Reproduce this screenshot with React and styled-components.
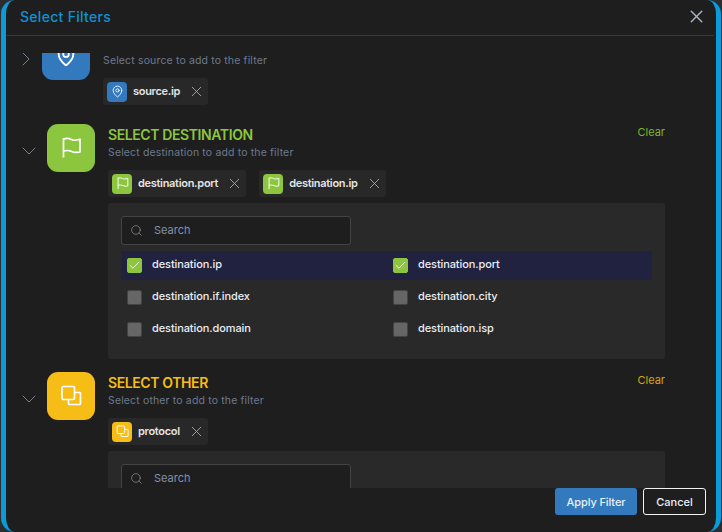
import React from 'react';
import styled, { createGlobalStyle } from 'styled-components';
import { ChevronRight, ChevronDown, X, Search, MapPin, Check } from 'lucide-react';

const GlobalStyle = createGlobalStyle`
  html, body {
    margin: 0;
    padding: 0;
    background: #2b2d31;
  }
  * {
    box-sizing: border-box;
  }
`;

const BLUE = '#3379bd';
const GREEN = '#8cc63f';
const YELLOW = '#f7bd17';

// lucide's flag has a base line and its copy is the wrong way round, so these two are drawn
function FlagIcon({ size, strokeWidth }) {
  return (
    <svg width={size} height={size} viewBox="0 0 22 22" fill="none" stroke="currentColor" strokeWidth={strokeWidth} strokeLinejoin="round">
      <path d="M3.5 1v19.5" />
      <path d="M3.5 2.2C7 .8 9.5 1.6 11.2 2.6S15.5 3.6 20 2.2V15C16 16 14 15.5 11.7 14.5S6 13.2 3.5 14.2" />
    </svg>
  );
}

function StackIcon({ size, strokeWidth }) {
  return (
    <svg width={size} height={size} viewBox="0 0 22 22" fill="none" stroke="currentColor" strokeWidth={strokeWidth} strokeLinejoin="round">
      <rect x="2" y="1.5" width="12.5" height="13" rx="1.5" />
      <path d="M14.5 7.5h5q1 0 1 1v10q0 1-1 1h-10q-1 0-1-1v-4" />
    </svg>
  );
}

const sections = [
  {
    id: 'destination',
    title: 'SELECT DESTINATION',
    desc: 'Select destination to add to the filter',
    color: GREEN,
    clear: '#7fb42f',
    Icon: FlagIcon,
    chips: ['destination.port', 'destination.ip'],
    options: [
      ['destination.ip', true],
      ['destination.port', true],
      ['destination.if.index', false],
      ['destination.city', false],
      ['destination.domain', false],
      ['destination.isp', false],
    ],
  },
  {
    id: 'other',
    title: 'SELECT OTHER',
    desc: 'Select other to add to the filter',
    color: YELLOW,
    clear: '#d9a514',
    Icon: StackIcon,
    chips: ['protocol'],
    options: [],
  },
];

function Chip({ label, color, Icon }) {
  return (
    <ChipBox>
      <ChipIcon $color={color}>
        <Icon size={13} strokeWidth={1.6} />
      </ChipIcon>
      <ChipLabel>{label}</ChipLabel>
      <ChipClose>
        <X size={17} strokeWidth={1.2} />
      </ChipClose>
    </ChipBox>
  );
}

function SearchBox() {
  return (
    <SearchField>
      <Search size={13} strokeWidth={1.2} color="#9a9a9a" />
      <SearchText>Search</SearchText>
    </SearchField>
  );
}

function Section({ section }) {
  const { title, desc, color, clear, Icon, chips, options } = section;
  return (
    <SectionRow>
      <Toggle>
        <ChevronDown size={24} strokeWidth={0.8} />
      </Toggle>
      <BigIcon $color={color}>
        <Icon size={22} strokeWidth={1.7} />
      </BigIcon>
      <SectionMain>
        <SectionHead>
          <SectionTitle $color={color}>{title}</SectionTitle>
          <ClearLink $color={clear}>Clear</ClearLink>
        </SectionHead>
        <SectionDesc>{desc}</SectionDesc>
        <ChipRow>
          {chips.map((c) => (
            <Chip key={c} label={c} color={color} Icon={Icon} />
          ))}
        </ChipRow>
        <Panel>
          <SearchBox />
          <OptionGrid>
            {options.map(([name, checked]) => (
              <Option key={name} $checked={checked}>
                <CheckBox $checked={checked}>
                  {checked && <Check size={13} strokeWidth={1.6} />}
                </CheckBox>
                <OptionLabel>{name}</OptionLabel>
              </Option>
            ))}
          </OptionGrid>
        </Panel>
      </SectionMain>
    </SectionRow>
  );
}

export default function App() {
  return (
    <>
      <GlobalStyle />
      <Modal>
        <Header>
          <Title>Select Filters</Title>
          <CloseBtn>
            <X size={21} strokeWidth={1.6} />
          </CloseBtn>
        </Header>
        <Body>
          <Scroller>
            <SourceRow>
              <Toggle $source>
                <ChevronRight size={24} strokeWidth={0.8} />
              </Toggle>
              <BigIcon $color={BLUE}>
                <MapPin size={22} strokeWidth={2} />
              </BigIcon>
              <SectionMain>
                <SectionHead>
                  <SectionTitle $color={BLUE}>SELECT SOURCE</SectionTitle>
                </SectionHead>
                <SectionDesc>Select source to add to the filter</SectionDesc>
                <ChipRow>
                  <Chip label="source.ip" color={BLUE} Icon={MapPin} />
                </ChipRow>
              </SectionMain>
            </SourceRow>
            {sections.map((s) => (
              <Section key={s.id} section={s} />
            ))}
          </Scroller>
        </Body>
        <Footer>
          <ApplyButton>Apply Filter</ApplyButton>
          <CancelButton>Cancel</CancelButton>
        </Footer>
      </Modal>
    </>
  );
}

const FONT = `'Inter', 'Liberation Sans', sans-serif`;

const Modal = styled.div`
  width: 720px;
  height: 532px;
  margin-left: 1px;
  display: flex;
  flex-direction: column;
  background: #1e1e1e;
  border-left: 5px solid #0c9bd9;
  border-right: 5px solid #0c9bd9;
  border-radius: 14px;
  font-family: ${FONT};
  overflow: hidden;
`;

const Header = styled.div`
  height: 36px;
  flex: none;
  display: flex;
  align-items: center;
  justify-content: space-between;
  margin: 0 2px 0 1px;
  padding: 0 7px 2px 13px;
  border-bottom: 1px solid #3a3a3a;
`;

const Title = styled.div`
  color: #0c93d6;
  font-size: 14px;
  font-weight: 500;
  letter-spacing: 0.3px;
`;

const CloseBtn = styled.div`
  display: flex;
  color: #a9b4c4;
`;

const Body = styled.div`
  height: 435px;
  margin-top: 17px;
  flex: none;
  overflow: hidden;
`;

const Scroller = styled.div`
  margin-top: -21px;
  display: flex;
  flex-direction: column;
  gap: 13px;
`;

const SectionRow = styled.div`
  display: flex;
  align-items: flex-start;
  padding-left: 11px;
  padding-right: 51px;
`;

const SourceRow = styled(SectionRow)`
  padding-left: 8px;
  height: 79px;
`;

const Toggle = styled.div`
  width: ${(p) => (p.$source ? '28px' : '30px')};
  margin-top: 15px;
  flex: none;
  display: flex;
  color: #8b99ad;
`;

const BigIcon = styled.div`
  width: 48px;
  height: 48px;
  flex: none;
  border-radius: 11px;
  display: flex;
  align-items: center;
  justify-content: center;
  color: #fff;
  background: ${(p) => p.$color};
`;

const SectionMain = styled.div`
  flex: 1;
  min-width: 0;
  margin-left: 13px;
  padding-top: 1px;
`;

const SectionHead = styled.div`
  display: flex;
  align-items: flex-start;
  justify-content: space-between;
`;

const SectionTitle = styled.div`
  color: ${(p) => p.$color};
  font-size: 14px;
  font-weight: 600;
  line-height: 20px;
  letter-spacing: -0.4px;
`;

const ClearLink = styled.div`
  color: ${(p) => p.$color};
  font-size: 11px;
  line-height: 14px;
`;

const SectionDesc = styled.div`
  color: #6d7a8d;
  font-size: 10.5px;
  line-height: 16px;
  letter-spacing: 0.15px;
`;

const ChipRow = styled.div`
  display: flex;
  gap: 13px;
  margin-top: 9px;
`;

const ChipBox = styled.div`
  height: 27px;
  display: flex;
  align-items: center;
  padding: 0 3px 0 4px;
  background: #282828;
  border-radius: 3px;
`;

const ChipIcon = styled.div`
  width: 20px;
  height: 20px;
  border-radius: 4px;
  display: flex;
  align-items: center;
  justify-content: center;
  color: #fff;
  background: ${(p) => p.$color};
`;

const ChipLabel = styled.span`
  margin-left: 6px;
  padding-bottom: 1px;
  color: #e4e4e4;
  font-size: 11px;
  font-weight: 600;
  letter-spacing: -0.3px;
`;

const ChipClose = styled.span`
  display: flex;
  margin-left: 8px;
  color: #a9b4c4;
`;

const Panel = styled.div`
  margin-top: 6px;
  padding: 13px 13px 15px;
  background: #292929;
  border-radius: 3px;
`;

const SearchField = styled.div`
  width: 230px;
  height: 29px;
  display: flex;
  align-items: center;
  padding: 0 8px;
  background: #1e1e1e;
  border: 1px solid #444;
  border-radius: 3px;
`;

const SearchText = styled.span`
  margin-left: 11px;
  padding-bottom: 2px;
  color: #8291a8;
  font-size: 11px;
`;

const OptionGrid = styled.div`
  display: grid;
  grid-template-columns: 266px 265px;
  grid-auto-rows: 29px;
  row-gap: 3px;
  margin-top: 6px;
`;

const Option = styled.div`
  display: flex;
  align-items: center;
  padding-left: 6px;
  border-radius: 3px;
  background: ${(p) => (p.$checked ? '#212140' : 'transparent')};
`;

const CheckBox = styled.div`
  width: 15px;
  height: 15px;
  flex: none;
  border-radius: 2px;
  display: flex;
  align-items: center;
  justify-content: center;
  color: #fff;
  background: ${(p) => (p.$checked ? GREEN : '#666')};
  border: 1px solid ${(p) => (p.$checked ? GREEN : '#444')};
`;

const OptionLabel = styled.span`
  margin-left: 10px;
  padding-bottom: 3px;
  color: #e8eef6;
  font-size: 11px;
  font-weight: 500;
  letter-spacing: -0.1px;
`;

const Footer = styled.div`
  flex: none;
  display: flex;
  justify-content: flex-end;
  gap: 6px;
  padding-right: 10px;
`;

const ApplyButton = styled.button`
  width: 82px;
  height: 27px;
  padding: 0;
  color: #e8f0fa;
  font-family: ${FONT};
  font-size: 11px;
  font-weight: 500;
  letter-spacing: -0.1px;
  background: ${BLUE};
  border: none;
  border-radius: 3px;
`;

const CancelButton = styled.button`
  width: 63px;
  height: 27px;
  padding: 0;
  color: #e8f0fa;
  font-family: ${FONT};
  font-size: 11px;
  font-weight: 500;
  background: transparent;
  border: 1px solid #f2f2f2;
  border-radius: 3px;
`;
